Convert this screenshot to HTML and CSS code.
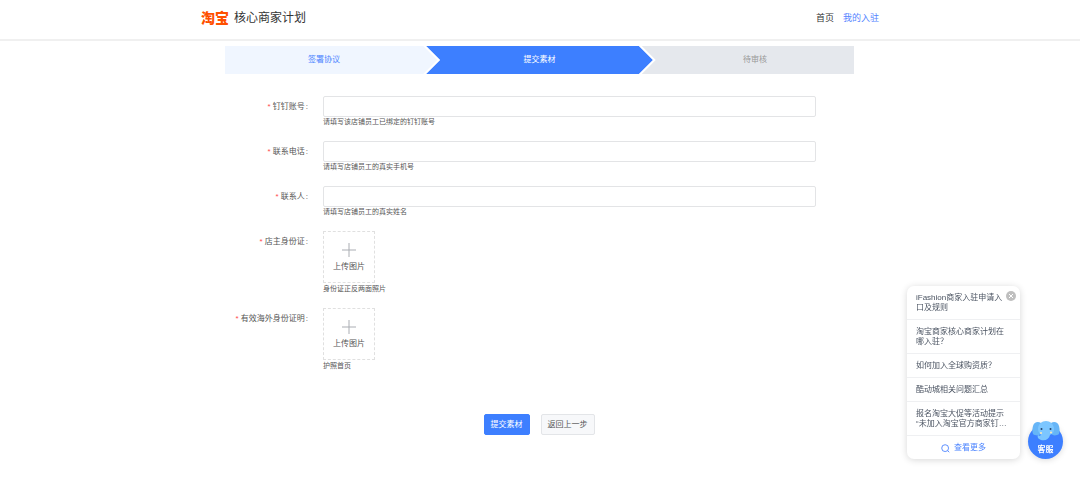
FILE: index.html
```html
<!DOCTYPE html>
<html lang="zh-CN">
<head>
<meta charset="utf-8">
<meta name="viewport" content="width=device-width, initial-scale=1">
<title>淘宝核心商家计划</title>
<link rel="stylesheet" href="styles.css">
</head>
<body>
<header class="header">
  <div class="header-inner">
    <div class="brand"><span class="brand-logo">淘宝</span><span class="brand-name">核心商家计划</span></div>
    <nav class="nav">
      <a class="nav-link" href="#">首页</a>
      <a class="nav-link active" href="#">我的入驻</a>
    </nav>
  </div>
</header>

<main class="content">
  <ol class="steps">
    <li class="step step-done">签署协议</li>
    <li class="step step-current" aria-current="step">提交素材</li>
    <li class="step step-wait">待审核</li>
  </ol>

  <form class="form">
    <div class="field">
      <label class="label" for="ding"><span class="required">*</span> 钉钉账号<span class="colon">:</span></label>
      <div class="control">
        <input class="input" id="ding" type="text">
        <p class="help">请填写该店铺员工已绑定的钉钉账号</p>
      </div>
    </div>
    <div class="field">
      <label class="label" for="phone"><span class="required">*</span> 联系电话<span class="colon">:</span></label>
      <div class="control">
        <input class="input" id="phone" type="tel">
        <p class="help">请填写店铺员工的真实手机号</p>
      </div>
    </div>
    <div class="field">
      <label class="label" for="contact"><span class="required">*</span> 联系人<span class="colon">:</span></label>
      <div class="control">
        <input class="input" id="contact" type="text">
        <p class="help">请填写店铺员工的真实姓名</p>
      </div>
    </div>
    <div class="field">
      <label class="label" for="idcard"><span class="required">*</span> 店主身份证<span class="colon">:</span></label>
      <div class="control">
        <button class="upload" id="idcard" type="button">
          <svg class="plus" viewBox="0 0 14 14" aria-hidden="true"><path d="M7 0v14M0 7h14"/></svg>
          <span>上传图片</span>
        </button>
        <p class="help upload-help">身份证正反两面照片</p>
      </div>
    </div>
    <div class="field">
      <label class="label" for="overseas"><span class="required">*</span> 有效海外身份证明<span class="colon">:</span></label>
      <div class="control">
        <button class="upload" id="overseas" type="button">
          <svg class="plus" viewBox="0 0 14 14" aria-hidden="true"><path d="M7 0v14M0 7h14"/></svg>
          <span>上传图片</span>
        </button>
        <p class="help upload-help">护照首页</p>
      </div>
    </div>
    <div class="actions">
      <button class="btn btn-primary" type="submit">提交素材</button>
      <button class="btn" type="button">返回上一步</button>
    </div>
  </form>
</main>

<aside class="service">
  <div class="faq">
    <button class="faq-close" type="button" aria-label="关闭">
      <svg viewBox="0 0 10 10" aria-hidden="true"><circle cx="5" cy="5" r="5" fill="#bfbfbf"/><path d="M3 3l4 4M7 3l-4 4" stroke="#fff" stroke-width="1"/></svg>
    </button>
    <a class="faq-item" href="#">iFashion商家入驻申请入口及规则</a>
    <a class="faq-item" href="#">淘宝商家核心商家计划在哪入驻？</a>
    <a class="faq-item" href="#">如何加入全球购资质？</a>
    <a class="faq-item" href="#">酷动城相关问题汇总</a>
    <a class="faq-item" href="#">报名淘宝大促等活动提示“未加入淘宝官方商家钉…</a>
    <a class="faq-more" href="#">
      <svg class="search" viewBox="0 0 10 10" aria-hidden="true"><circle cx="4.6" cy="4.6" r="3.8"/><path d="M7.4 7.4l1.8 1.8"/></svg>
      查看更多
    </a>
  </div>
  <button class="assistant" type="button">
    <svg class="elephant" viewBox="0 0 28 20" aria-hidden="true">
      <path d="M9 2C6 0 2 1 1 5c-1 4-1 9 2 9 3 1 5 0 6-2z" fill="#66b5f7"/>
      <path d="M19 2c3-2 7-1 8 3 1 4 1 9-2 9-3 1-5 0-6-2z" fill="#66b5f7"/>
      <path d="M6 8c0-5 4-8 8-8s8 3 8 8c0 4-2 5-4 6-1 4-4 6-9 5-3-1-4-3-3-5 1 1 2 1 3 0-1-1-3-3-3-6z" fill="#7cc6ff"/>
      <circle cx="9.500" cy="8" r="1" fill="#24436b"/><circle cx="18.500" cy="8" r="1" fill="#24436b"/>
      <circle cx="9" cy="12" r="1" fill="#ffe9b8"/><circle cx="19" cy="11.500" r="1" fill="#ffe9b8"/>
    </svg>
    <span>客服</span>
  </button>
</aside>
</body>
</html>
```
FILE: styles.css
```css
* {
  box-sizing: border-box;
}

body {
  margin: 0;
  background: #fff;
  color: #555;
  font: 8px/10px "Liberation Sans", "Noto Sans CJK SC", sans-serif;
}

a {
  color: inherit;
  text-decoration: none;
}

button,
input {
  font: inherit;
  color: inherit;
}

button {
  cursor: pointer;
}

.header {
  border-bottom: 2px solid #f0f0f0;
}

.header-inner {
  display: flex;
  align-items: center;
  justify-content: space-between;
  max-width: 680px;
  margin: 0 auto;
  padding: 9px 1px 12px;
}

.brand {
  display: flex;
  align-items: center;
  gap: 5px;
  line-height: 18px;
}

.brand-logo {
  color: #ff5000;
  font-size: 14px;
  font-weight: 900;
}

.brand-name {
  color: #333;
  font-size: 12px;
}

.nav {
  display: flex;
  gap: 9px;
  font-size: 9px;
  line-height: 18px;
}

.nav-link {
  color: #333;
}

.nav-link.active {
  color: #5584ff;
}

.content {
  max-width: 630px;
  margin: 0 auto;
  padding: 5px 0 40px;
}

.steps {
  display: flex;
  margin: 0;
  padding: 0 1px 0 0;
  list-style: none;
  line-height: 28px;
  text-align: center;
}

.step {
  flex: 7;
}

.step + .step {
  margin-left: -11px;
}

.step-done {
  padding-right: 14px;
  background: #f0f6ff;
  color: #4d85ff;
  clip-path: polygon(0 0, calc(100% - 14px) 0, 100% 50%, calc(100% - 14px) 100%, 0 100%);
}

.step-current {
  flex: 8;
  background: #3d7fff;
  color: #fff;
  clip-path: polygon(0 0, calc(100% - 14px) 0, 100% 50%, calc(100% - 14px) 100%, 0 100%, 14px 50%);
}

.step-wait {
  padding-left: 14px;
  background: #e5e8ed;
  color: #999;
  clip-path: polygon(0 0, 100% 0, 100% 100%, 0 100%, 14px 50%);
}

.form {
  display: flex;
  flex-direction: column;
  gap: 14px;
  padding: 22px 39px 0 0;
}

.field {
  display: grid;
  grid-template-columns: 84px 1fr;
  gap: 14px;
}

.label {
  line-height: 21px;
  text-align: right;
  white-space: nowrap;
}

.required {
  color: #ff4d4d;
}

.colon {
  padding: 0 1px;
}

.input {
  display: block;
  width: 100%;
  height: 21px;
  padding: 0 6px;
  border: 1px solid #e3e4e6;
  border-radius: 2px;
  background: #fff;
  outline: none;
}

.help {
  margin: 0;
  font-size: 7px;
  line-height: 10px;
}

.upload {
  display: flex;
  flex-direction: column;
  align-items: center;
  justify-content: center;
  gap: 5px;
  width: 52px;
  height: 52px;
  padding: 0;
  border: 1px dashed #e0e0e0;
  background: #fff;
}

.plus {
  width: 14px;
  height: 14px;
  fill: none;
  stroke: #aaadb3;
}

.upload-help {
  padding-top: 1px;
}

.actions {
  display: flex;
  justify-content: center;
  gap: 11px;
  padding: 29px 0 0 37px;
}

.btn {
  padding: 4px 6px;
  border: 1px solid #e3e5e8;
  border-radius: 2px;
  background: #f7f8fa;
  line-height: 11px;
}

.btn-primary {
  border-color: #3d7fff;
  background: #3d7fff;
  color: #fff;
}

.service {
  position: fixed;
  right: 17px;
  bottom: 32px;
  display: flex;
  align-items: flex-end;
  gap: 8px;
}

.faq {
  position: relative;
  width: 113px;
  border-radius: 7px;
  background: #fff;
  box-shadow: 0 1px 7px rgba(0, 0, 0, 0.16);
  color: #4a5361;
}

.faq-item {
  display: block;
  padding: 7px 9px 6px;
  border-bottom: 1px solid #eff0f2;
}

.faq-item:first-of-type {
  padding-right: 16px;
}

.faq-more {
  display: flex;
  align-items: center;
  justify-content: center;
  gap: 4px;
  padding: 7px 0 6px;
  color: #4d85ff;
}

.search {
  width: 9px;
  height: 9px;
  fill: none;
  stroke: #4d85ff;
}

.faq-close {
  position: absolute;
  top: 5px;
  right: 4px;
  width: 10px;
  height: 10px;
  padding: 0;
  border: 0;
  background: none;
}

.faq-close svg {
  display: block;
}

.assistant {
  position: relative;
  width: 35px;
  height: 35px;
  padding: 16px 0 0;
  border: 0;
  border-radius: 50%;
  background: #3d7fff;
  box-shadow: 0 1px 6px rgba(0, 0, 0, 0.15);
  color: #fff;
  font-weight: bold;
}

.elephant {
  position: absolute;
  top: -3px;
  left: 4px;
  width: 28px;
  height: 20px;
}
```
